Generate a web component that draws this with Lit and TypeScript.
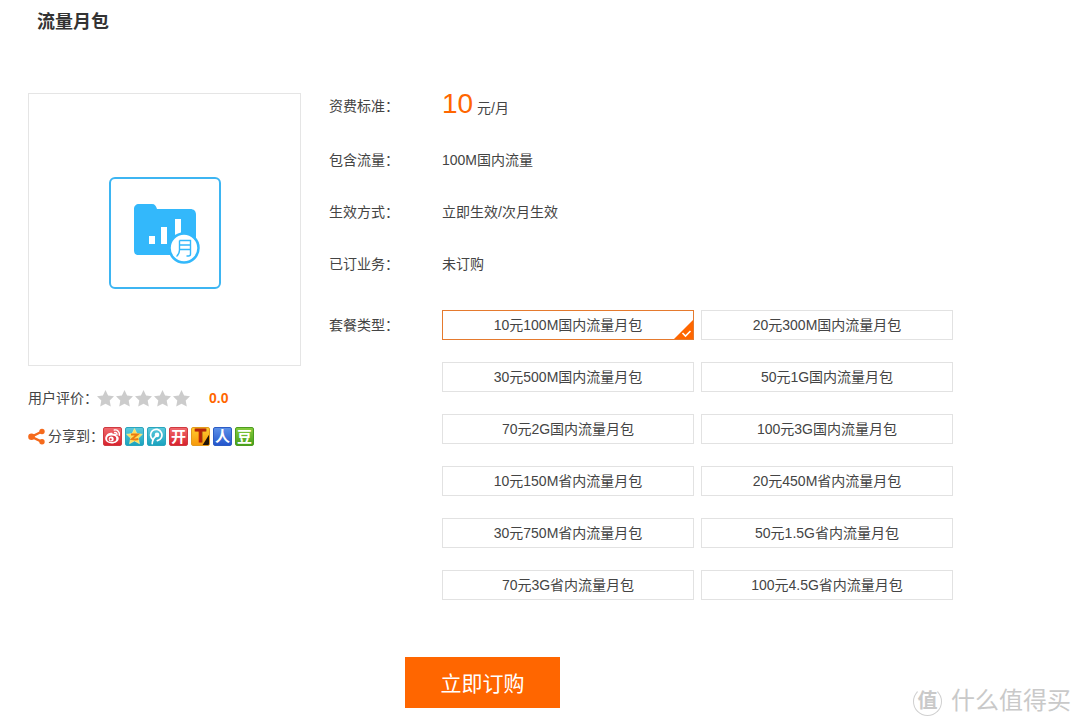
import { LitElement, html, css, svg, nothing } from "lit";
import { customElement, state } from "lit/decorators.js";

interface ShareTarget {
  name: string;
  kind: string;
  glyph?: string;
}

const PACKAGES = [
  "10元100M国内流量月包",
  "20元300M国内流量月包",
  "30元500M国内流量月包",
  "50元1G国内流量月包",
  "70元2G国内流量月包",
  "100元3G国内流量月包",
  "10元150M省内流量月包",
  "20元450M省内流量月包",
  "30元750M省内流量月包",
  "50元1.5G省内流量月包",
  "70元3G省内流量月包",
  "100元4.5G省内流量月包",
];

const SHARES: ShareTarget[] = [
  { name: "新浪微博", kind: "weibo" },
  { name: "QQ空间", kind: "qzone" },
  { name: "腾讯微博", kind: "tencent" },
  { name: "开心网", kind: "kaixin", glyph: "开" },
  { name: "天涯", kind: "tianya", glyph: "T" },
  { name: "人人网", kind: "renren", glyph: "人" },
  { name: "豆瓣", kind: "douban", glyph: "豆" },
];

const SHARE_ART: Record<string, unknown> = {
  weibo: svg`
    <path d="M8.3 5.800C5.300 5.400 2.200 8.500 2.200 11.500c0 2.800 2.900 4.900 6.500 4.900 4 0 7-2.300 7-5 0-1.600-1.200-2.500-2.600-2.900.5-1.700-1-2.300-3.400-1.400.2-.8-.4-1.300-1.400-1.300z" fill="#fff"/>
    <ellipse cx="8.700" cy="11.700" rx="4.600" ry="3.300" fill="#de3a44"/>
    <circle cx="8.200" cy="11.900" r="2.500" fill="#fff"/>
    <circle cx="7.700" cy="12.300" r="1.100" fill="#de3a44"/>
    <path d="M11.300 3c3.200-.6 5.700 2 5 5.200M11.700 5.500c1.600-.2 2.500.9 2.200 2.300" fill="none" stroke="#fff" stroke-width="1.400" stroke-linecap="round"/>`,
  qzone: svg`
    <path d="M9.500 1.600l2.400 5 5.500.7-4 3.800 1.100 5.700-5-2.900-5 2.900 1.100-5.700-4-3.800 5.500-.7z" fill="#ffdf58" stroke="#fff0a0" stroke-width=".6"/>
    <path d="M6 7.400h6.500l-5.700 4.700c2.400.5 4.400.5 6.600 0" fill="none" stroke="#ea7c12" stroke-width="2"/>`,
  tencent: svg`
    <path d="M6 12.700A5.700 5.700 0 1 1 10.400 13.600" fill="none" stroke="#fff" stroke-width="1.700" stroke-linecap="round"/>
    <circle cx="10" cy="7.900" r="2.300" fill="#fff"/>
    <path d="M9.300 9C6.800 10.700 5.300 13.200 5.200 16.800" fill="none" stroke="#fff" stroke-width="1.600" stroke-linecap="round"/>`,
  tianya: svg`<path d="M19 6v13h-8z" fill="#1f1308"/>`,
};

@customElement("share-link")
export class ShareLink extends LitElement {
  static properties = { target: { attribute: false } };
  declare target: ShareTarget;

  static styles = css`
    :host {
      display: block;
    }
    .tile {
      position: relative;
      display: flex;
      align-items: center;
      justify-content: center;
      box-sizing: border-box;
      width: 19px;
      height: 19px;
      border: 1px solid;
      border-radius: 2px;
      overflow: hidden;
      color: #fff;
      font-size: 15px;
      font-weight: 700;
      line-height: 17px;
      text-decoration: none;
    }
    .art {
      position: absolute;
      inset: -1px;
      width: 19px;
      height: 19px;
    }
    .glyph {
      position: relative;
    }
    .weibo,
    .kaixin {
      background: linear-gradient(#f0686c, #d8232f);
      border-color: #cf3a40;
    }
    .qzone,
    .tencent {
      background: linear-gradient(#5cc9dc, #1ba3bf);
      border-color: #2ba5bd;
    }
    .tianya {
      background: linear-gradient(#ffcb2e, #f79a0c);
      border-color: #e39a1c;
      color: #b52408;
      font-size: 18px;
      -webkit-text-stroke: 1px #b52408;
    }
    .renren {
      background: linear-gradient(#5c90e8, #2556cb);
      border-color: #2c5cc4;
    }
    .douban {
      background: linear-gradient(#84cb3c, #48a01a);
      border-color: #4c9c20;
    }
  `;

  render() {
    const { kind, name, glyph } = this.target;
    const art = SHARE_ART[kind];
    return html`<a class="tile ${kind}" href="#${kind}" aria-label=${name}>
      ${art ? html`<svg class="art" viewBox="0 0 19 19" aria-hidden="true">${art}</svg>` : nothing}
      ${glyph ? html`<span class="glyph">${glyph}</span>` : nothing}
    </a>`;
  }
}

@customElement("app-root")
export class AppRoot extends LitElement {
  @state() private selected = 0;

  static styles = css`
    :host {
      display: block;
      position: relative;
      box-sizing: border-box;
      min-height: 100vh;
      padding: 8px 28px 18px;
      background: #fff;
      color: #444;
      font-family: "Liberation Sans", "Noto Sans CJK SC", sans-serif;
      font-size: 14px;
      line-height: 20px;
    }
    .title {
      margin: 0 0 57px;
      padding-left: 9px;
      color: #333;
      font-size: 18px;
      line-height: 28px;
    }
    .product {
      display: flex;
      align-items: flex-start;
      gap: 28px;
    }
    .aside {
      flex: none;
      width: 273px;
    }
    .picture {
      display: flex;
      align-items: center;
      justify-content: center;
      box-sizing: border-box;
      height: 273px;
      margin-bottom: 22px;
      padding-top: 7px;
      border: 1px solid #e5e5e5;
    }
    .picture-art {
      width: 114px;
      height: 114px;
    }
    .line {
      display: flex;
      align-items: center;
      height: 20px;
      margin-bottom: 18px;
    }
    .stars {
      display: flex;
      gap: 2px;
      margin-right: 19px;
    }
    .star {
      width: 17px;
      height: 17px;
      fill: #ccc;
    }
    .score {
      color: #f60;
    }
    .share-icon {
      width: 17px;
      height: 17px;
      margin-right: 3px;
    }
    .shares {
      display: flex;
      gap: 3px;
    }
    .caption {
      white-space: nowrap;
    }
    .rating-caption {
      width: 69px;
    }
    .share-caption {
      width: 55px;
    }
    .details {
      flex: 1;
      min-width: 0;
      margin: -15px 0 0;
    }
    .row {
      display: grid;
      grid-template-columns: 113px minmax(0, 1fr);
      align-items: center;
      min-height: 52px;
    }
    .row:first-child {
      min-height: 56px;
    }
    .value {
      margin: 0;
    }
    .row:first-child .value {
      padding-bottom: 4px;
    }
    .price {
      color: #f60;
      font-size: 28px;
      line-height: 28px;
    }
    .package-row {
      align-items: start;
      padding-top: 20px;
      line-height: 30px;
    }
    .packages {
      display: grid;
      grid-template-columns: repeat(2, minmax(0, 1fr));
      gap: 22px 7px;
      max-width: 511px;
      margin: 0;
      padding: 0;
      border: 0;
    }
    .package {
      position: relative;
      display: block;
      box-sizing: border-box;
      height: 30px;
      border: 1px solid #e2e2e2;
      line-height: 28px;
      text-align: center;
      cursor: pointer;
    }
    .package.chosen {
      border-color: #e57a2e;
    }
    .radio {
      position: absolute;
      inset: 0;
      width: 100%;
      height: 100%;
      margin: 0;
      appearance: none;
      cursor: pointer;
    }
    .tick {
      position: absolute;
      right: 0;
      bottom: 0;
      width: 19px;
      height: 19px;
    }
    .actions {
      padding: 57px 0 0 377px;
    }
    .order {
      width: 155px;
      height: 51px;
      padding: 2px 0 0;
      border: 0;
      background: #f60;
      color: #fff;
      font: inherit;
      font-size: 21px;
      cursor: pointer;
    }
    .watermark {
      position: absolute;
      right: 9px;
      bottom: 10px;
      display: flex;
      align-items: center;
      gap: 9px;
      color: #c9c9c9;
      font-size: 24px;
      line-height: 30px;
    }
    .seal {
      display: flex;
      align-items: center;
      justify-content: center;
      box-sizing: border-box;
      width: 29px;
      height: 29px;
      border: 1px solid #d0d0d0;
      border-top-color: transparent;
      border-radius: 50%;
      font-size: 20px;
      font-weight: 700;
    }
  `;

  private renderPicture() {
    return html`<svg class="picture-art" viewBox="0 0 114 114" role="img" aria-label="流量月包">
      <rect x="2" y="2" width="110" height="110" rx="5" fill="#fff" stroke="#3db5f2" stroke-width="2" />
      <path
        d="M31 28h13c3 0 4 2 5 5h33c4 0 6 2 6 6v34c0 4-2 6-6 6H31c-4 0-5-2-5-5V33c0-3 2-5 5-5z"
        fill="#33b8fb"
      />
      <path d="M41 60h6v8h-6zM53 51h6v17h-6zM67 43h6v16h-6z" fill="#fff" />
      <circle cx="76" cy="72" r="14.500" fill="#fff" stroke="#33b8fb" stroke-width="2.500" />
      <path
        d="M71.500 64.500h11V78q0 2-2 2h-2M71.500 64.500V74q0 4-3 6.500M71.500 69h11M71.500 73.500h11"
        fill="none"
        stroke="#33b8fb"
        stroke-width="1.400"
      />
    </svg>`;
  }

  private renderPackage(name: string, index: number) {
    const chosen = index === this.selected;
    return html`<label class="package ${chosen ? "chosen" : ""}">
      <input
        class="radio"
        type="radio"
        name="package"
        .checked=${chosen}
        @change=${() => (this.selected = index)}
      />
      ${name}
      ${chosen
        ? html`<svg class="tick" viewBox="0 0 19 19" aria-hidden="true">
            <path d="M19 0v19H0z" fill="#f60" />
            <path d="M8.500 13l3 3 5-5" fill="none" stroke="#fff" stroke-width="1.600" />
          </svg>`
        : nothing}
    </label>`;
  }

  private renderRow(label: string, value: unknown) {
    return html`<div class="row">
      <dt>${label}：</dt>
      <dd class="value">${value}</dd>
    </div>`;
  }

  render() {
    return html`
      <h1 class="title">流量月包</h1>
      <main>
        <div class="product">
          <div class="aside">
            <div class="picture">${this.renderPicture()}</div>
            <div class="line">
              <span class="caption rating-caption">用户评价：</span>
              <span class="stars">
                ${[1, 2, 3, 4, 5].map(
                  () => html`<svg class="star" viewBox="0 0 17 17" aria-hidden="true">
                    <path d="M8.500 0l2.600 5.500 5.900.8-4.300 4.200 1.100 6.100-5.300-2.900-5.300 2.900 1.100-6.100L0 6.300l5.900-.8z" />
                  </svg>`
                )}
              </span>
              <strong class="score">0.0</strong>
            </div>
            <div class="line">
              <svg class="share-icon" viewBox="0 0 17 17" aria-hidden="true">
                <path d="M14 3.500L3.500 8.800 14 13.800" fill="none" stroke="#f56a1c" stroke-width="2.400" />
                <circle cx="14" cy="3.500" r="2.700" fill="#f56a1c" />
                <circle cx="3.500" cy="8.800" r="3.300" fill="#f56a1c" />
                <circle cx="14" cy="13.800" r="2.700" fill="#f56a1c" />
              </svg>
              <span class="caption share-caption">分享到：</span>
              <nav class="shares" aria-label="分享到">
                ${SHARES.map((target) => html`<share-link .target=${target}></share-link>`)}
              </nav>
            </div>
          </div>
          <dl class="details">
            ${this.renderRow("资费标准", html`<span class="price">10</span> 元/月`)}
            ${this.renderRow("包含流量", "100M国内流量")}
            ${this.renderRow("生效方式", "立即生效/次月生效")}
            ${this.renderRow("已订业务", "未订购")}
            <div class="row package-row">
              <dt>套餐类型：</dt>
              <dd class="value">
                <fieldset class="packages" aria-label="套餐类型">
                  ${PACKAGES.map((name, index) => this.renderPackage(name, index))}
                </fieldset>
              </dd>
            </div>
          </dl>
        </div>
        <div class="actions"><button class="order" type="button">立即订购</button></div>
      </main>
      <div class="watermark"><span class="seal">值</span><span>什么值得买</span></div>
    `;
  }
}
